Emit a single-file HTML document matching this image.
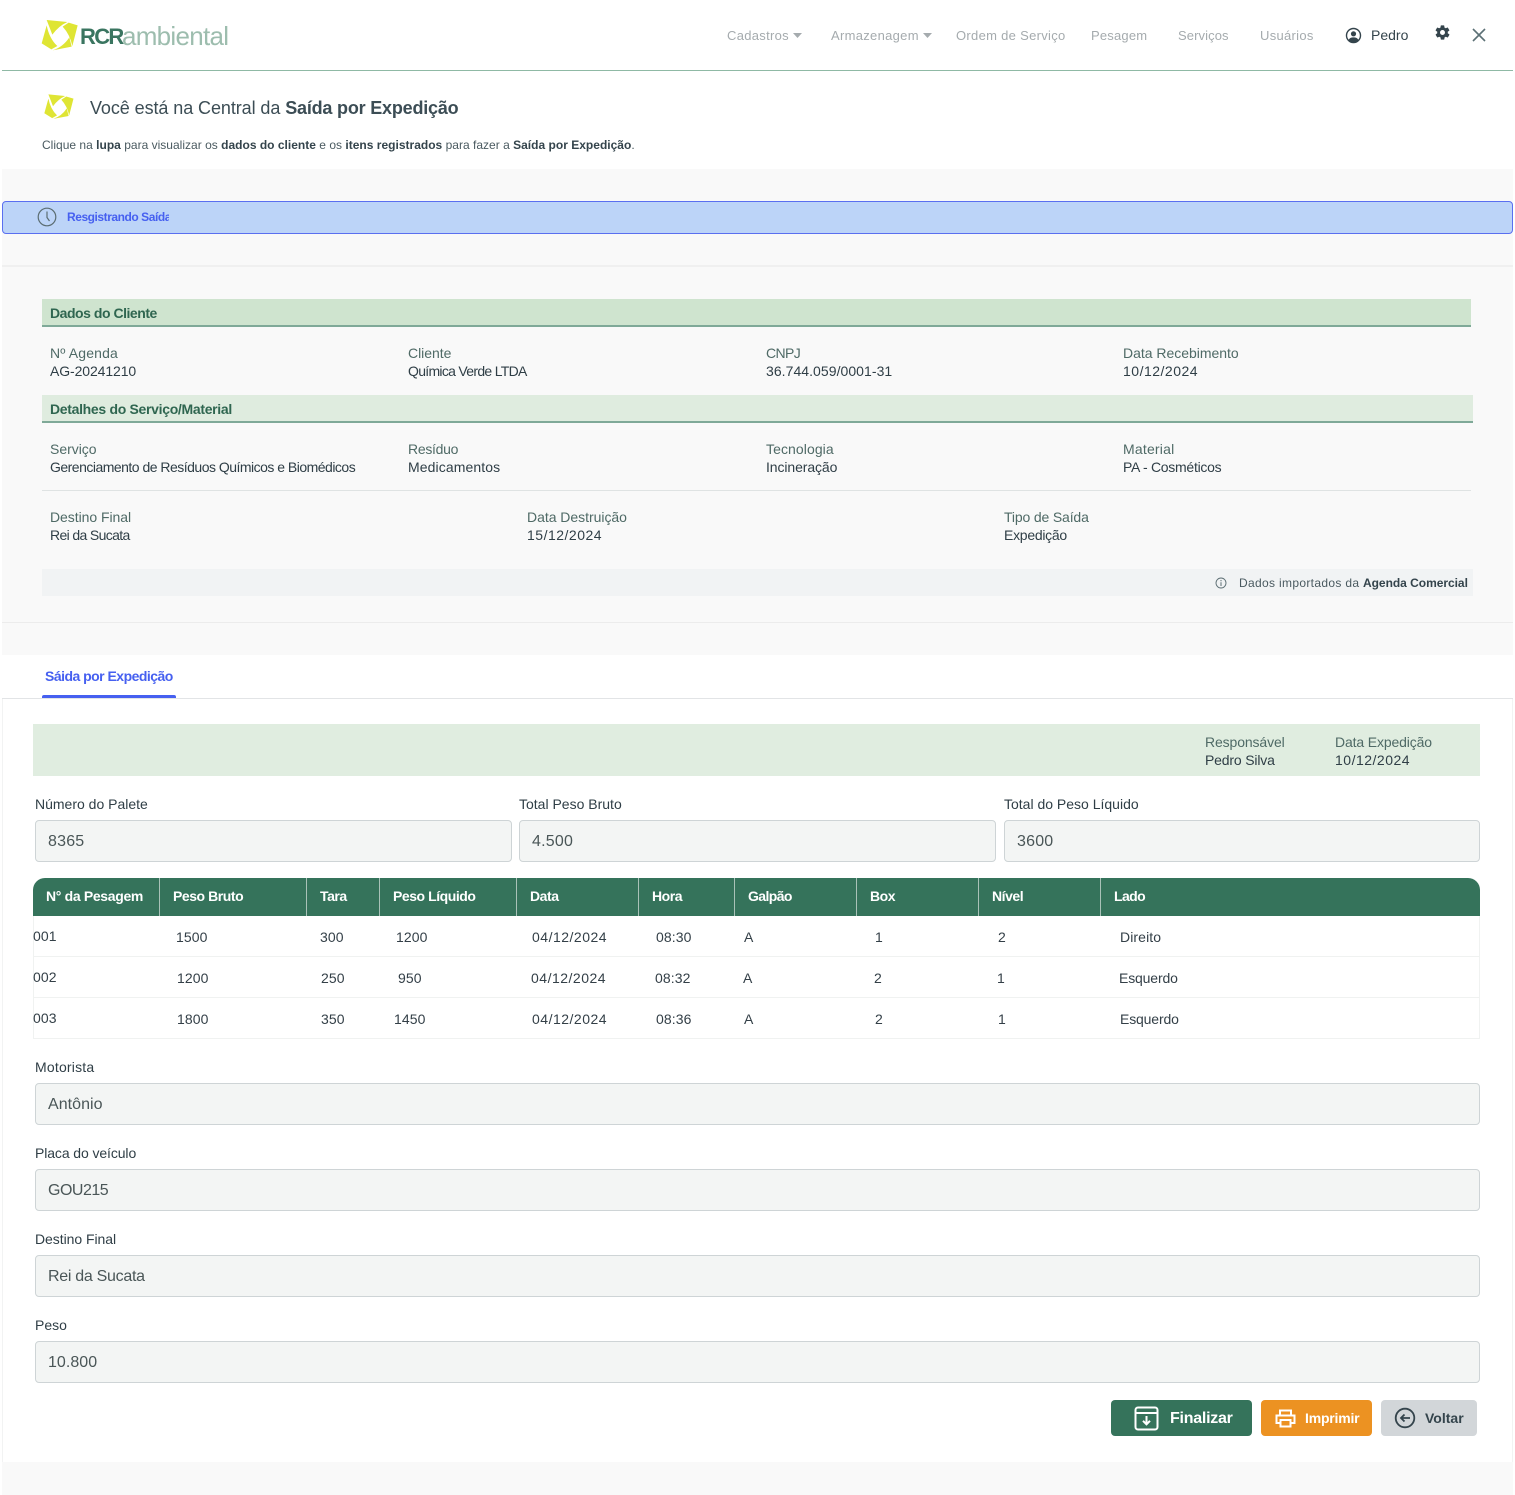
<!DOCTYPE html>
<html lang="pt-BR"><head><meta charset="utf-8"><title>Saída por Expedição</title>
<style>
html,body{margin:0;padding:0;background:#fff}
#p{position:relative;width:1515px;height:1495px;overflow:hidden;background:#fff;font-family:"Liberation Sans",sans-serif;color:#2f3e46;font-size:14px}
.b{position:absolute}
.t{position:absolute;white-space:nowrap;line-height:18px}
.nav{color:#a5abae;font-size:13px;letter-spacing:.3px}
.lb{color:#4f6a66;letter-spacing:-.02px}
.v{color:#2f3e46;letter-spacing:-.1px}
.sec{color:#2f6650;font-weight:bold;letter-spacing:-.31px}
.th{color:#fff;font-weight:bold;letter-spacing:-.45px}
.vs{position:absolute;top:878px;width:1px;height:38px;background:#a9c2b8}
.td{color:#333f47;letter-spacing:.1px}
.d{letter-spacing:.5px}
.f{position:absolute;box-sizing:border-box;height:42px;background:#f3f5f4;border:1px solid #ced4d6;border-radius:4px;font-size:16px;line-height:41px;padding-left:12px;color:#4a5657;letter-spacing:.2px}
.fl{color:#2f3e46;letter-spacing:0}
.rl{position:absolute;left:33px;width:1447px;height:1px;background:#f0f2f1}
b{font-weight:bold}
</style></head><body><div id="p">

<!-- header -->
<svg class="b" style="left:40px;top:16px" width="42" height="38" viewBox="0 0 126 114"><g fill="#dfe534"><path d="M20 12L82 18Q56 30 37 56Z"/><path d="M86 20L113 28 97 90Q90 56 68 32Z"/><path d="M95 92L38 103Q70 92 88 64Z"/><path d="M5 82L20 28Q28 68 52 90L34 100Z"/></g></svg>
<div class="t" style="left:80px;top:24px;font-size:22px;line-height:26px;font-weight:bold;color:#3a7560;letter-spacing:-1.7px">RCR</div>
<div class="t" style="left:122px;top:20px;font-size:26px;line-height:32px;color:#9dbdae;letter-spacing:-.72px">ambiental</div>

<div class="t nav" style="left:727px;top:27px">Cadastros</div>
<svg class="b" style="left:793px;top:33px" width="9" height="5"><path d="M0 0H9L4.500 5Z" fill="#a5abae"/></svg>
<div class="t nav" style="left:831px;top:27px">Armazenagem</div>
<svg class="b" style="left:923px;top:33px" width="9" height="5"><path d="M0 0H9L4.500 5Z" fill="#a5abae"/></svg>
<div class="t nav" style="left:956px;top:27px">Ordem de Serviço</div>
<div class="t nav" style="left:1091px;top:27px;letter-spacing:.2px">Pesagem</div>
<div class="t nav" style="left:1178px;top:27px;letter-spacing:.1px">Serviços</div>
<div class="t nav" style="left:1260px;top:27px">Usuários</div>
<svg class="b" style="left:1345px;top:27px" width="17" height="17" viewBox="0 0 17 17"><circle cx="8.500" cy="8.500" r="7" fill="none" stroke="#34444c" stroke-width="1.400"/><circle cx="8.500" cy="6.800" r="2.600" fill="#34444c"/><path d="M3.500 13.200C4.500 10.800 6.500 10.400 8.500 10.400S12.500 10.800 13.500 13.200C12 15 10.500 15.500 8.500 15.500S5 15 3.500 13.200Z" fill="#34444c"/></svg>
<div class="t" style="left:1371px;top:26px;font-size:14px;color:#34444c;letter-spacing:0">Pedro</div>
<svg class="b" style="left:1434px;top:24px" width="17" height="17" viewBox="0 0 24 24"><path fill="#34444c" fill-rule="evenodd" d="M19.400 13c.04-.33.06-.66.06-1s-.02-.67-.06-1l2.100-1.650c.2-.15.25-.43.12-.65l-2-3.460c-.12-.22-.38-.3-.6-.22l-2.500 1c-.52-.4-1.080-.73-1.700-.98l-.37-2.650A.5.5 0 0 0 14 2h-4c-.25 0-.46.18-.5.42l-.37 2.650c-.62.25-1.180.58-1.700.98l-2.500-1c-.22-.08-.48 0-.6.22l-2 3.460c-.13.22-.08.5.12.65L4.600 11c-.04.33-.06.66-.06 1s.02.67.06 1l-2.100 1.650c-.2.15-.25.43-.12.65l2 3.460c.12.22.38.3.6.22l2.500-1c.52.4 1.080.73 1.700.98l.37 2.650c.04.24.25.42.5.42h4c.25 0 .46-.18.5-.42l.37-2.650c.62-.25 1.180-.58 1.700-.98l2.500 1c.22.08.48 0 .6-.22l2-3.460c.13-.22.08-.5-.12-.65L19.400 13zM12 15.500a3.500 3.500 0 1 1 0-7 3.500 3.500 0 0 1 0 7z"/></svg>
<svg class="b" style="left:1471px;top:27px" width="16" height="16" viewBox="0 0 16 16"><path d="M2 2L14 14M14 2L2 14" stroke="#5b7075" stroke-width="1.600" fill="none"/></svg>
<div class="b" style="left:2px;top:70px;width:1511px;height:1px;background:#8fb9a5"></div>

<!-- title -->
<svg class="b" style="left:43px;top:91px" width="34" height="31" viewBox="0 0 126 114"><g fill="#dfe534"><path d="M20 12L82 18Q56 30 37 56Z"/><path d="M86 20L113 28 97 90Q90 56 68 32Z"/><path d="M95 92L38 103Q70 92 88 64Z"/><path d="M5 82L20 28Q28 68 52 90L34 100Z"/></g></svg>
<div class="t" style="left:90px;top:97px;font-size:18px;line-height:22px;color:#3c4d55;letter-spacing:-.08px">Você está na Central da <b style="letter-spacing:-.2px">Saída por Expedição</b></div>
<div class="t" style="left:42px;top:136px;font-size:12px;color:#4a5a60;letter-spacing:.01px">Clique na <b style="color:#34444c">lupa</b> para visualizar os <b style="color:#34444c">dados do cliente</b> e os <b style="color:#34444c">itens registrados</b> para fazer a <b style="color:#34444c">Saída por Expedição</b>.</div>

<!-- grey area -->
<div class="b" style="left:2px;top:169px;width:1511px;height:486px;background:#f9f9f9"></div>
<div class="b" style="left:2px;top:201px;width:1511px;height:33px;box-sizing:border-box;background:#bcd4f8;border:1px solid #5a6ff0;border-radius:4px"></div>
<svg class="b" style="left:37px;top:207px" width="20" height="20" viewBox="0 0 20 20"><circle cx="10" cy="10" r="8.800" fill="none" stroke="#5b6d72" stroke-width="1.200"/><path d="M10 4.500V10.500L12.500 14" fill="none" stroke="#5b6d72" stroke-width="1.200"/></svg>
<div class="t" style="left:67px;top:208px;width:102px;overflow:hidden;font-size:12px;font-weight:bold;color:#4660f0;letter-spacing:-.45px">Resgistrando Saída</div>
<div class="b" style="left:2px;top:265px;width:1511px;height:2px;background:#f0f0f0"></div>

<!-- client data -->
<div class="b" style="left:42px;top:299px;width:1429px;height:26px;background:#cfe4cf;border-bottom:2px solid #7fa998"></div>
<div class="t sec" style="left:50px;top:304px;letter-spacing:-.47px">Dados do Cliente</div>
<div class="t lb" style="left:50px;top:344px;letter-spacing:.15px">Nº Agenda</div><div class="t v" style="left:50px;top:362px">AG-20241210</div>
<div class="t lb" style="left:408px;top:344px">Cliente</div><div class="t v" style="left:408px;top:362px;letter-spacing:-.7px">Química Verde LTDA</div>
<div class="t lb" style="left:766px;top:344px;letter-spacing:-.6px">CNPJ</div><div class="t v" style="left:766px;top:362px;letter-spacing:.05px">36.744.059/0001-31</div>
<div class="t lb" style="left:1123px;top:344px">Data Recebimento</div><div class="t v d" style="left:1123px;top:362px">10/12/2024</div>

<div class="b" style="left:42px;top:395px;width:1431px;height:26px;background:#dfecdf;border-bottom:2px solid #7fa998"></div>
<div class="t sec" style="left:50px;top:400px">Detalhes do Serviço/Material</div>
<div class="t lb" style="left:50px;top:440px">Serviço</div><div class="t v" style="left:50px;top:458px;letter-spacing:-.51px">Gerenciamento de Resíduos Químicos e Biomédicos</div>
<div class="t lb" style="left:408px;top:440px;letter-spacing:-.28px">Resíduo</div><div class="t v" style="left:408px;top:458px;letter-spacing:.1px">Medicamentos</div>
<div class="t lb" style="left:766px;top:440px;letter-spacing:.08px">Tecnologia</div><div class="t v" style="left:766px;top:458px">Incineração</div>
<div class="t lb" style="left:1123px;top:440px;letter-spacing:.2px">Material</div><div class="t v" style="left:1123px;top:458px;letter-spacing:-.27px">PA - Cosméticos</div>
<div class="b" style="left:42px;top:490px;width:1429px;height:1px;background:#dfe3e3"></div>

<div class="t lb" style="left:50px;top:508px;letter-spacing:-.05px">Destino Final</div><div class="t v" style="left:50px;top:526px;letter-spacing:-.64px">Rei da Sucata</div>
<div class="t lb" style="left:527px;top:508px;letter-spacing:-.03px">Data Destruição</div><div class="t v d" style="left:527px;top:526px">15/12/2024</div>
<div class="t lb" style="left:1004px;top:508px;letter-spacing:-.15px">Tipo de Saída</div><div class="t v" style="left:1004px;top:526px;letter-spacing:-.27px">Expedição</div>

<div class="b" style="left:42px;top:569px;width:1431px;height:27px;background:#f1f3f4"></div>
<svg class="b" style="left:1215px;top:577px" width="12" height="12" viewBox="0 0 12 12"><circle cx="6" cy="6" r="5" fill="none" stroke="#5b6d72" stroke-width=".9"/><path d="M6 5.200V9M6 3V4.200" stroke="#5b6d72" stroke-width="1" fill="none"/></svg>
<div class="t" style="left:1239px;top:574px;font-size:12px;color:#4a5a60;letter-spacing:.33px">Dados importados da <b style="color:#34444c;letter-spacing:-.03px">Agenda Comercial</b></div>
<div class="b" style="left:2px;top:622px;width:1511px;height:1px;background:#ececec"></div>

<!-- tab -->
<div class="t" style="left:45px;top:667px;font-weight:bold;color:#4660f0;letter-spacing:-.52px">Sáida por Expedição</div>
<div class="b" style="left:2px;top:698px;width:1511px;height:1px;background:#e2e4e6"></div>
<div class="b" style="left:42px;top:695px;width:134px;height:3px;background:#4660f0;border-radius:2px 2px 0 0"></div>
<div class="b" style="left:2px;top:699px;width:1px;height:763px;background:#f2f3f3"></div>
<div class="b" style="left:1512px;top:699px;width:1px;height:763px;background:#f2f3f3"></div>

<!-- green bar -->
<div class="b" style="left:33px;top:724px;width:1447px;height:52px;background:#e0ede0"></div>
<div class="t lb" style="left:1205px;top:733px;letter-spacing:-.12px">Responsável</div><div class="t v" style="left:1205px;top:751px;letter-spacing:-.17px">Pedro Silva</div>
<div class="t lb" style="left:1335px;top:733px;letter-spacing:-.14px">Data Expedição</div><div class="t v d" style="left:1335px;top:751px">10/12/2024</div>

<!-- fields top -->
<div class="t fl" style="left:35px;top:795px">Número do Palete</div>
<div class="t fl" style="left:519px;top:795px">Total Peso Bruto</div>
<div class="t fl" style="left:1004px;top:795px">Total do Peso Líquido</div>
<div class="f" style="left:35px;top:820px;width:477px">8365</div>
<div class="f" style="left:519px;top:820px;width:477px">4.500</div>
<div class="f" style="left:1004px;top:820px;width:476px">3600</div>

<!-- table -->
<div class="b" style="left:33px;top:878px;width:1447px;height:38px;background:#35735b;border-radius:12px 12px 0 0"></div>
<div class="vs" style="left:159px"></div><div class="vs" style="left:306px"></div><div class="vs" style="left:379px"></div><div class="vs" style="left:516px"></div><div class="vs" style="left:638px"></div><div class="vs" style="left:734px"></div><div class="vs" style="left:856px"></div><div class="vs" style="left:978px"></div><div class="vs" style="left:1100px"></div>
<div class="t th" style="left:46px;top:887px;letter-spacing:-.33px">N° da Pesagem</div>
<div class="t th" style="left:173px;top:887px">Peso Bruto</div>
<div class="t th" style="left:320px;top:887px">Tara</div>
<div class="t th" style="left:393px;top:887px">Peso Líquido</div>
<div class="t th" style="left:530px;top:887px">Data</div>
<div class="t th" style="left:652px;top:887px">Hora</div>
<div class="t th" style="left:748px;top:887px;letter-spacing:-.6px">Galpão</div>
<div class="t th" style="left:870px;top:887px">Box</div>
<div class="t th" style="left:992px;top:887px">Nível</div>
<div class="t th" style="left:1114px;top:887px;letter-spacing:-.6px">Lado</div>
<div class="b" style="left:33px;top:916px;width:1px;height:123px;background:#f0f2f1"></div>
<div class="b" style="left:1479px;top:916px;width:1px;height:123px;background:#f0f2f1"></div>
<div class="rl" style="top:956px"></div><div class="rl" style="top:997px"></div><div class="rl" style="top:1038px"></div>

<div class="t td" style="left:33px;top:927px">001</div><div class="t td" style="left:176px;top:928px">1500</div><div class="t td" style="left:320px;top:928px">300</div><div class="t td" style="left:396px;top:928px">1200</div><div class="t td d" style="left:532px;top:928px">04/12/2024</div><div class="t td" style="left:656px;top:928px">08:30</div><div class="t td" style="left:744px;top:928px">A</div><div class="t td" style="left:875px;top:928px">1</div><div class="t td" style="left:998px;top:928px">2</div><div class="t td" style="left:1120px;top:928px">Direito</div>

<div class="t td" style="left:33px;top:968px">002</div><div class="t td" style="left:177px;top:969px">1200</div><div class="t td" style="left:321px;top:969px">250</div><div class="t td" style="left:398px;top:969px">950</div><div class="t td d" style="left:531px;top:969px">04/12/2024</div><div class="t td" style="left:655px;top:969px">08:32</div><div class="t td" style="left:743px;top:969px">A</div><div class="t td" style="left:874px;top:969px">2</div><div class="t td" style="left:997px;top:969px">1</div><div class="t td" style="left:1119px;top:969px;letter-spacing:-.15px">Esquerdo</div>

<div class="t td" style="left:33px;top:1009px">003</div><div class="t td" style="left:177px;top:1010px">1800</div><div class="t td" style="left:321px;top:1010px">350</div><div class="t td" style="left:394px;top:1010px">1450</div><div class="t td d" style="left:532px;top:1010px">04/12/2024</div><div class="t td" style="left:656px;top:1010px">08:36</div><div class="t td" style="left:744px;top:1010px">A</div><div class="t td" style="left:875px;top:1010px">2</div><div class="t td" style="left:998px;top:1010px">1</div><div class="t td" style="left:1120px;top:1010px;letter-spacing:-.15px">Esquerdo</div>

<!-- fields bottom -->
<div class="t fl" style="left:35px;top:1058px;letter-spacing:.2px">Motorista</div>
<div class="f" style="left:35px;top:1083px;width:1445px;letter-spacing:.05px">Antônio</div>
<div class="t fl" style="left:35px;top:1144px;letter-spacing:-.1px">Placa do veículo</div>
<div class="f" style="left:35px;top:1169px;width:1445px;letter-spacing:-.5px">GOU215</div>
<div class="t fl" style="left:35px;top:1230px;letter-spacing:-.05px">Destino Final</div>
<div class="f" style="left:35px;top:1255px;width:1445px;letter-spacing:-.29px">Rei da Sucata</div>
<div class="t fl" style="left:35px;top:1316px">Peso</div>
<div class="f" style="left:35px;top:1341px;width:1445px;letter-spacing:.03px">10.800</div>

<!-- buttons -->
<div class="b" style="left:1111px;top:1400px;width:141px;height:36px;background:#35735b;border-radius:4px"></div>
<svg class="b" style="left:1134px;top:1406px" width="25" height="25" viewBox="0 0 25 25"><rect x="1.500" y="1.500" width="22" height="22" rx="2.500" fill="none" stroke="#fff" stroke-width="2"/><path d="M1.500 7H23.500" stroke="#fff" stroke-width="2"/><path d="M12.500 10V18M9 14.800L12.500 18.300 16 14.800" fill="none" stroke="#fff" stroke-width="2"/></svg>
<div class="t" style="left:1170px;top:1409px;font-size:16px;line-height:20px;font-weight:bold;color:#fff;letter-spacing:-.25px">Finalizar</div>

<div class="b" style="left:1261px;top:1400px;width:111px;height:36px;background:#ec9222;border-radius:4px"></div>
<svg class="b" style="left:1275px;top:1409px" width="21" height="19" viewBox="0 0 21 19"><path d="M5 6V1.500H16V6M5 14H1.500V6.500H19.500V14H16" fill="none" stroke="#fff" stroke-width="2"/><rect x="5.500" y="11" width="10" height="6.500" fill="none" stroke="#fff" stroke-width="2"/></svg>
<div class="t" style="left:1305px;top:1409px;font-weight:bold;color:#fff;letter-spacing:-.2px">Imprimir</div>

<div class="b" style="left:1381px;top:1400px;width:96px;height:36px;background:#d2d6d9;border-radius:4px"></div>
<svg class="b" style="left:1394px;top:1407px" width="22" height="22" viewBox="0 0 22 22"><circle cx="11" cy="11" r="9.300" fill="none" stroke="#34444c" stroke-width="1.800"/><path d="M16 11H7M10.500 7.500L7 11 10.500 14.500" fill="none" stroke="#34444c" stroke-width="1.800"/></svg>
<div class="t" style="left:1425px;top:1409px;font-weight:bold;color:#34444c;letter-spacing:0">Voltar</div>

<div class="b" style="left:2px;top:1462px;width:1511px;height:33px;background:#f9f9f9"></div>
</div></body></html>
